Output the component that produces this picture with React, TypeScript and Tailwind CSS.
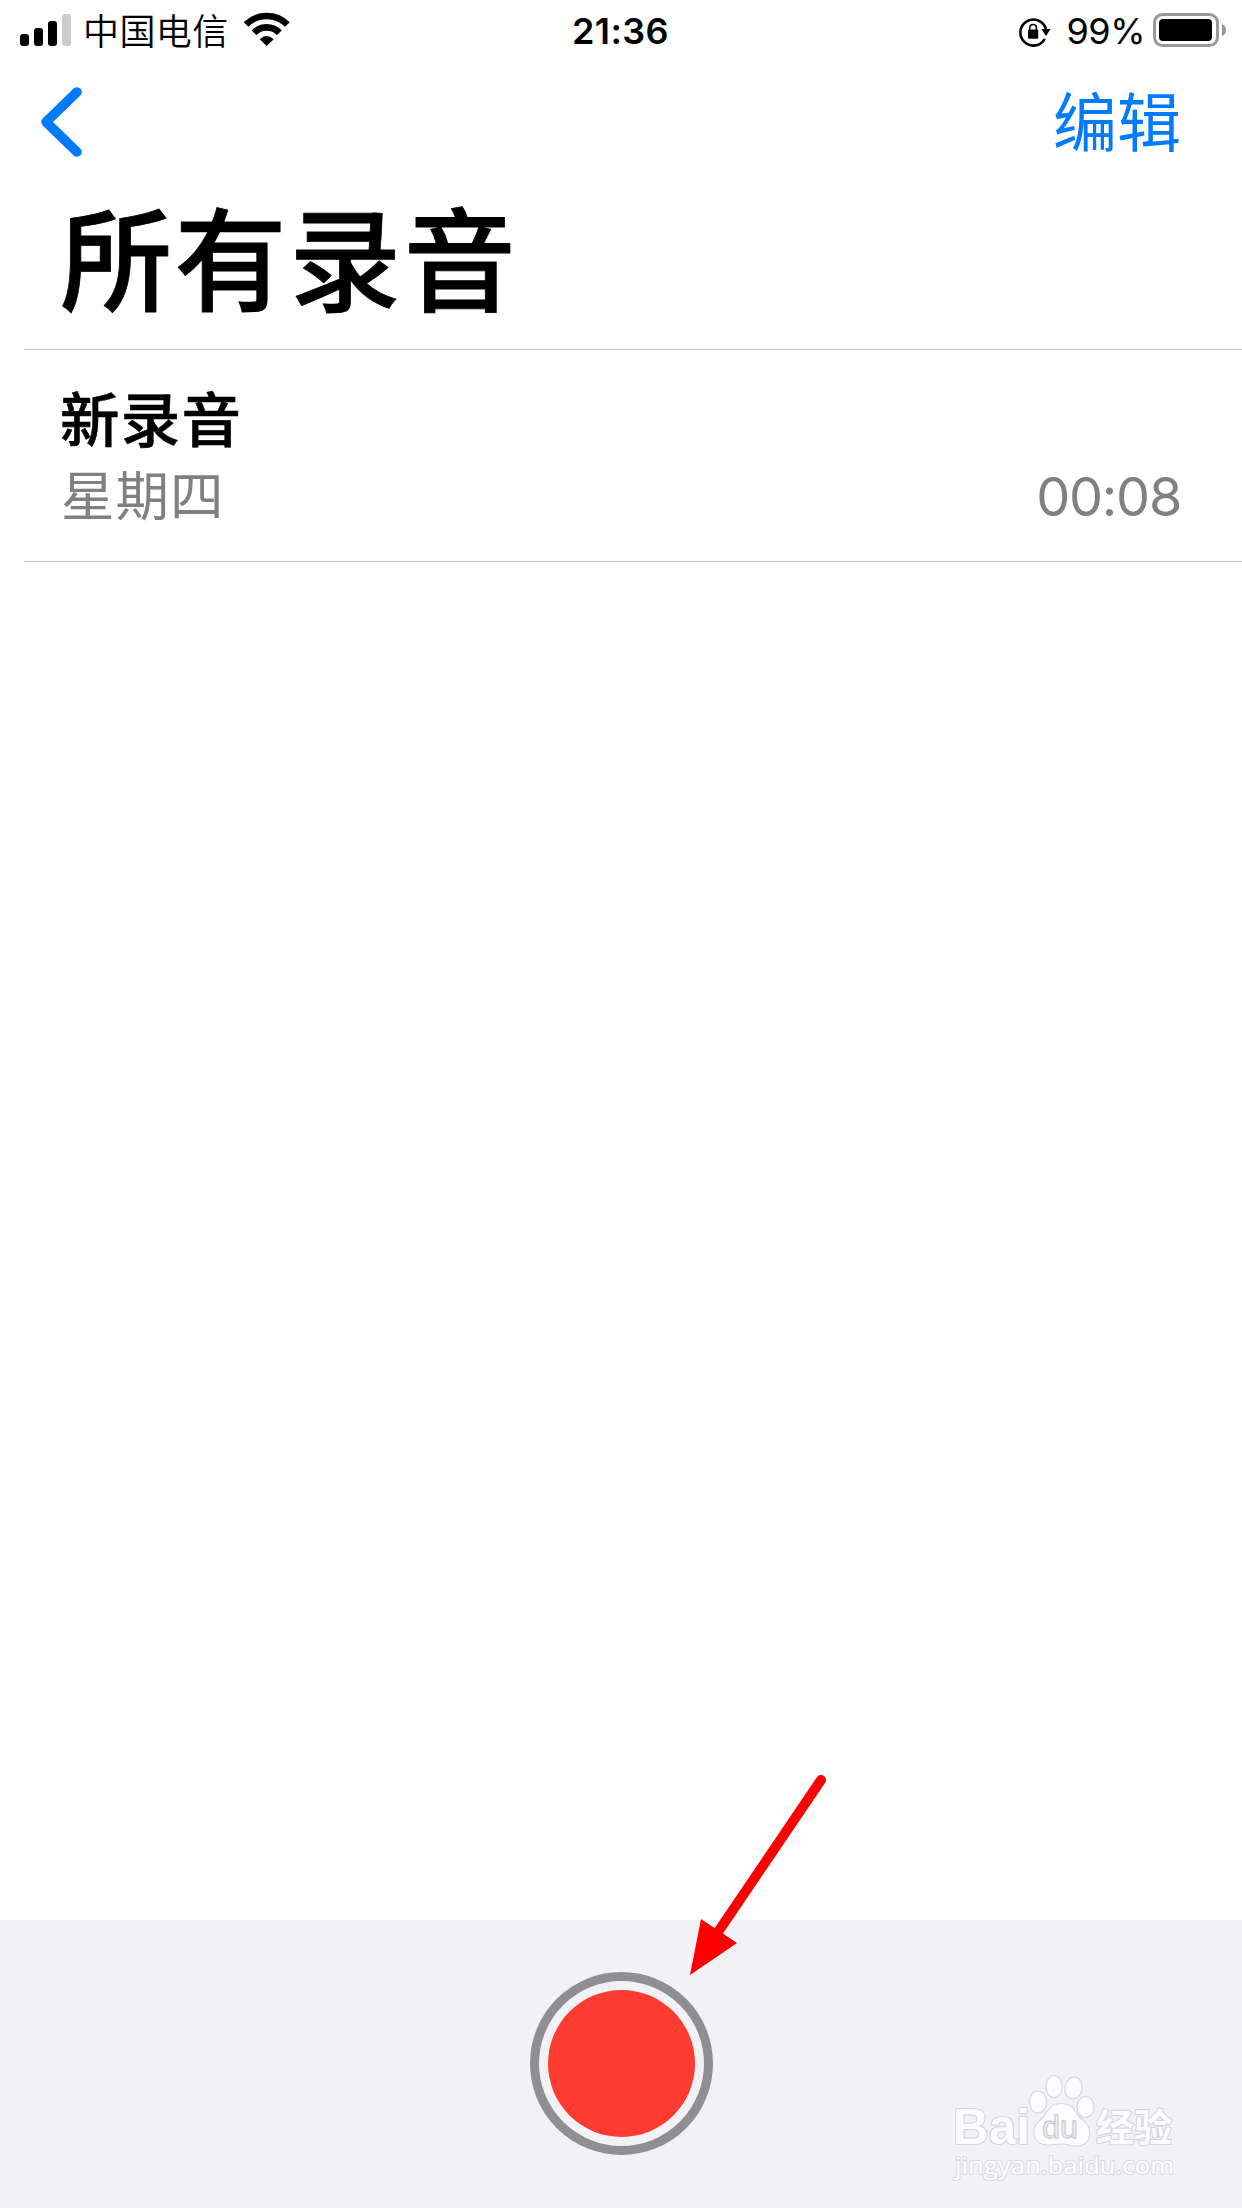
import React from 'react';

const bars = ['h-[12px] bg-black', 'h-[18px] bg-black', 'h-[25px] bg-black', 'h-[32px] bg-[#cccccc]'];

const WifiIcon: React.FC = () => (
  <svg className="ml-[15px] mt-[12px] h-[35px] w-[47px]" viewBox="0 0 47 35" fill="none">
    <path d="M2 12.500A29.500 29.500 0 0 1 43.400 12.500" stroke="#000" strokeWidth="6.600" />
    <path d="M10 20.800A17.500 17.500 0 0 1 35.400 20.800" stroke="#000" strokeWidth="6.600" />
    <path d="M15.800 27.200Q22.700 20.800 29.700 27.200L22.700 34Z" fill="#000" />
  </svg>
);

const RotationLockIcon: React.FC = () => (
  <svg className="mt-[17px] h-[31px] w-[32px]" viewBox="0 0 32 31" fill="none">
    <path d="M25.8 21.800A13 13 0 1 1 26.900 12" stroke="#000" strokeWidth="2.600" />
    <path d="M22.400 12H31.500L27 19Z" fill="#000" />
    <rect x="9" y="12.600" width="10.200" height="9.200" rx="1.200" fill="#000" />
    <path d="M10.800 13.500V10.900a3.300 3.300 0 0 1 6.600 0V13.500" stroke="#000" strokeWidth="1.500" />
  </svg>
);

const BatteryIcon: React.FC = () => (
  <svg className="ml-[8px] mt-[13px] h-[34px] w-[74px]" viewBox="0 0 74 34" fill="none">
    <rect x="1.500" y="1.500" width="63" height="31" rx="8" stroke="#999" strokeWidth="3" />
    <rect x="6" y="6" width="53" height="22" rx="4" fill="#000" />
    <path d="M69 11Q73 12.500 73 17T69 23Z" fill="#999" />
  </svg>
);

const StatusBar: React.FC = () => (
  <header className="grid h-[64px] grid-cols-3">
    <div className="flex pl-[20px]">
      <div className="flex h-[46px] items-end gap-[5px]">
        {bars.map((bar) => (
          <span key={bar} className={`w-[9px] rounded-[3px] ${bar}`} />
        ))}
      </div>
      <span className="ml-[12px] mt-[6px] text-[36px] leading-[52px] font-[350] tracking-[0.4px] whitespace-nowrap">中国电信</span>
      <WifiIcon />
    </div>
    <div className="pr-[1px] pt-[5px] text-center text-[36px] leading-[52px] font-semibold tracking-[0.4px]">21:36</div>
    <div className="flex justify-end pr-[15px]">
      <RotationLockIcon />
      <span className="ml-[16px] mt-[5px] text-[36px] leading-[52px] tracking-[-0.5px]">99%</span>
      <BatteryIcon />
    </div>
  </header>
);

const Watermark: React.FC = () => (
  <svg className="absolute bottom-[8px] left-[950px] h-[130px] w-[232px]" viewBox="0 0 232 130">
    <g fill="#fcfcfe" stroke="#d5d5d9" strokeWidth="2.200" paintOrder="stroke" strokeLinejoin="round">
      <text x="3" y="73.500" fontFamily="Liberation Sans" fontWeight="700" fontSize="50" textLength="77" lengthAdjust="spacingAndGlyphs">Bai</text>
      <ellipse cx="88" cy="32" rx="8" ry="10.500" />
      <ellipse cx="104" cy="16.500" rx="7.500" ry="10.500" />
      <ellipse cx="123.500" cy="18" rx="8" ry="10.500" transform="rotate(10 123.500 18)" />
      <ellipse cx="135.500" cy="37" rx="8" ry="10" />
      <path d="M111.500 34C98 34 98 45 90 51C80 59 84 75 98 74.500C104 74.500 107 73.500 112 73.500S122 75.500 127 75.500C141 75.500 143 58 133 51C124 45 125 34 111.500 34Z" />
      <text x="146" y="71" fontFamily="Noto Sans CJK SC" fontWeight="700" fontSize="38" textLength="76" lengthAdjust="spacingAndGlyphs">经验</text>
      <text x="5" y="103.500" fontFamily="Open Sans" fontSize="24" textLength="219" lengthAdjust="spacingAndGlyphs" stroke="#dcdce0">jingyan.baidu.com</text>
    </g>
    <text x="92" y="68" fontFamily="Liberation Sans" fontSize="31" textLength="36" lengthAdjust="spacingAndGlyphs" fill="#f0f0f4" stroke="#d0d0d5" strokeWidth="1.300">du</text>
  </svg>
);

const App: React.FC = () => (
  <div className="relative flex h-[2208px] w-[1242px] flex-col overflow-hidden bg-white font-['Inter','Noto_Sans_CJK_SC',sans-serif] text-black">
    <StatusBar />

    <nav className="flex h-[116px] items-start justify-between pl-[40px] pr-[61px] text-[#007aff]">
      <svg className="mt-[22px] h-[72px] w-[43px]" viewBox="0 0 43 72" fill="none">
        <path d="M37 6L6 36L37 66" stroke="currentColor" strokeWidth="9.600" strokeLinecap="round" strokeLinejoin="round" />
      </svg>
      <button className="mt-[15px] text-[64px] leading-[88px]">编辑</button>
    </nav>

    <h1 className="h-[169px] pl-[60px] text-[112px] leading-[164px] font-medium tracking-[2.600px] [-webkit-text-stroke:0.8px_black]">所有录音</h1>

    <ul className="ml-[24px] border-t border-[#c6c6c8]">
      <li className="h-[212px] border-b border-[#c6c6c8] pl-[36px] pr-[60px] pt-[28px]">
        <h2 className="h-[84px] text-[59.500px] leading-[84px] font-medium tracking-[1.200px] [-webkit-text-stroke:0.6px_black]">新录音</h2>
        <div className="flex justify-between leading-[70px] text-[#808080]">
          <span className="pl-[1px] text-[53.500px] tracking-[1px]">星期四</span>
          <span className="mr-[1px] text-[54px] tracking-[-1.300px]">00:08</span>
        </div>
      </li>
    </ul>

    <footer className="relative mt-auto flex h-[288px] justify-center bg-[#f2f1f6] pt-[52px]">
      <button aria-label="录音" className="flex h-[183px] w-[183px] items-center justify-center rounded-full border-[9px] border-[#8e8e93]">
        <span className="h-[147px] w-[147px] rounded-full bg-[#ff3b30]" />
      </button>
      <Watermark />
    </footer>

    {/* Pointer to the record button */}
    <svg className="absolute left-[680px] top-[1765px] h-[220px] w-[160px]" viewBox="0 0 160 220">
      <path d="M141 15L38 167" stroke="#ff0000" strokeWidth="10" strokeLinecap="round" />
      <path d="M10 210L21 154L57 178Z" fill="#ff0000" />
    </svg>
  </div>
);

export default App;
